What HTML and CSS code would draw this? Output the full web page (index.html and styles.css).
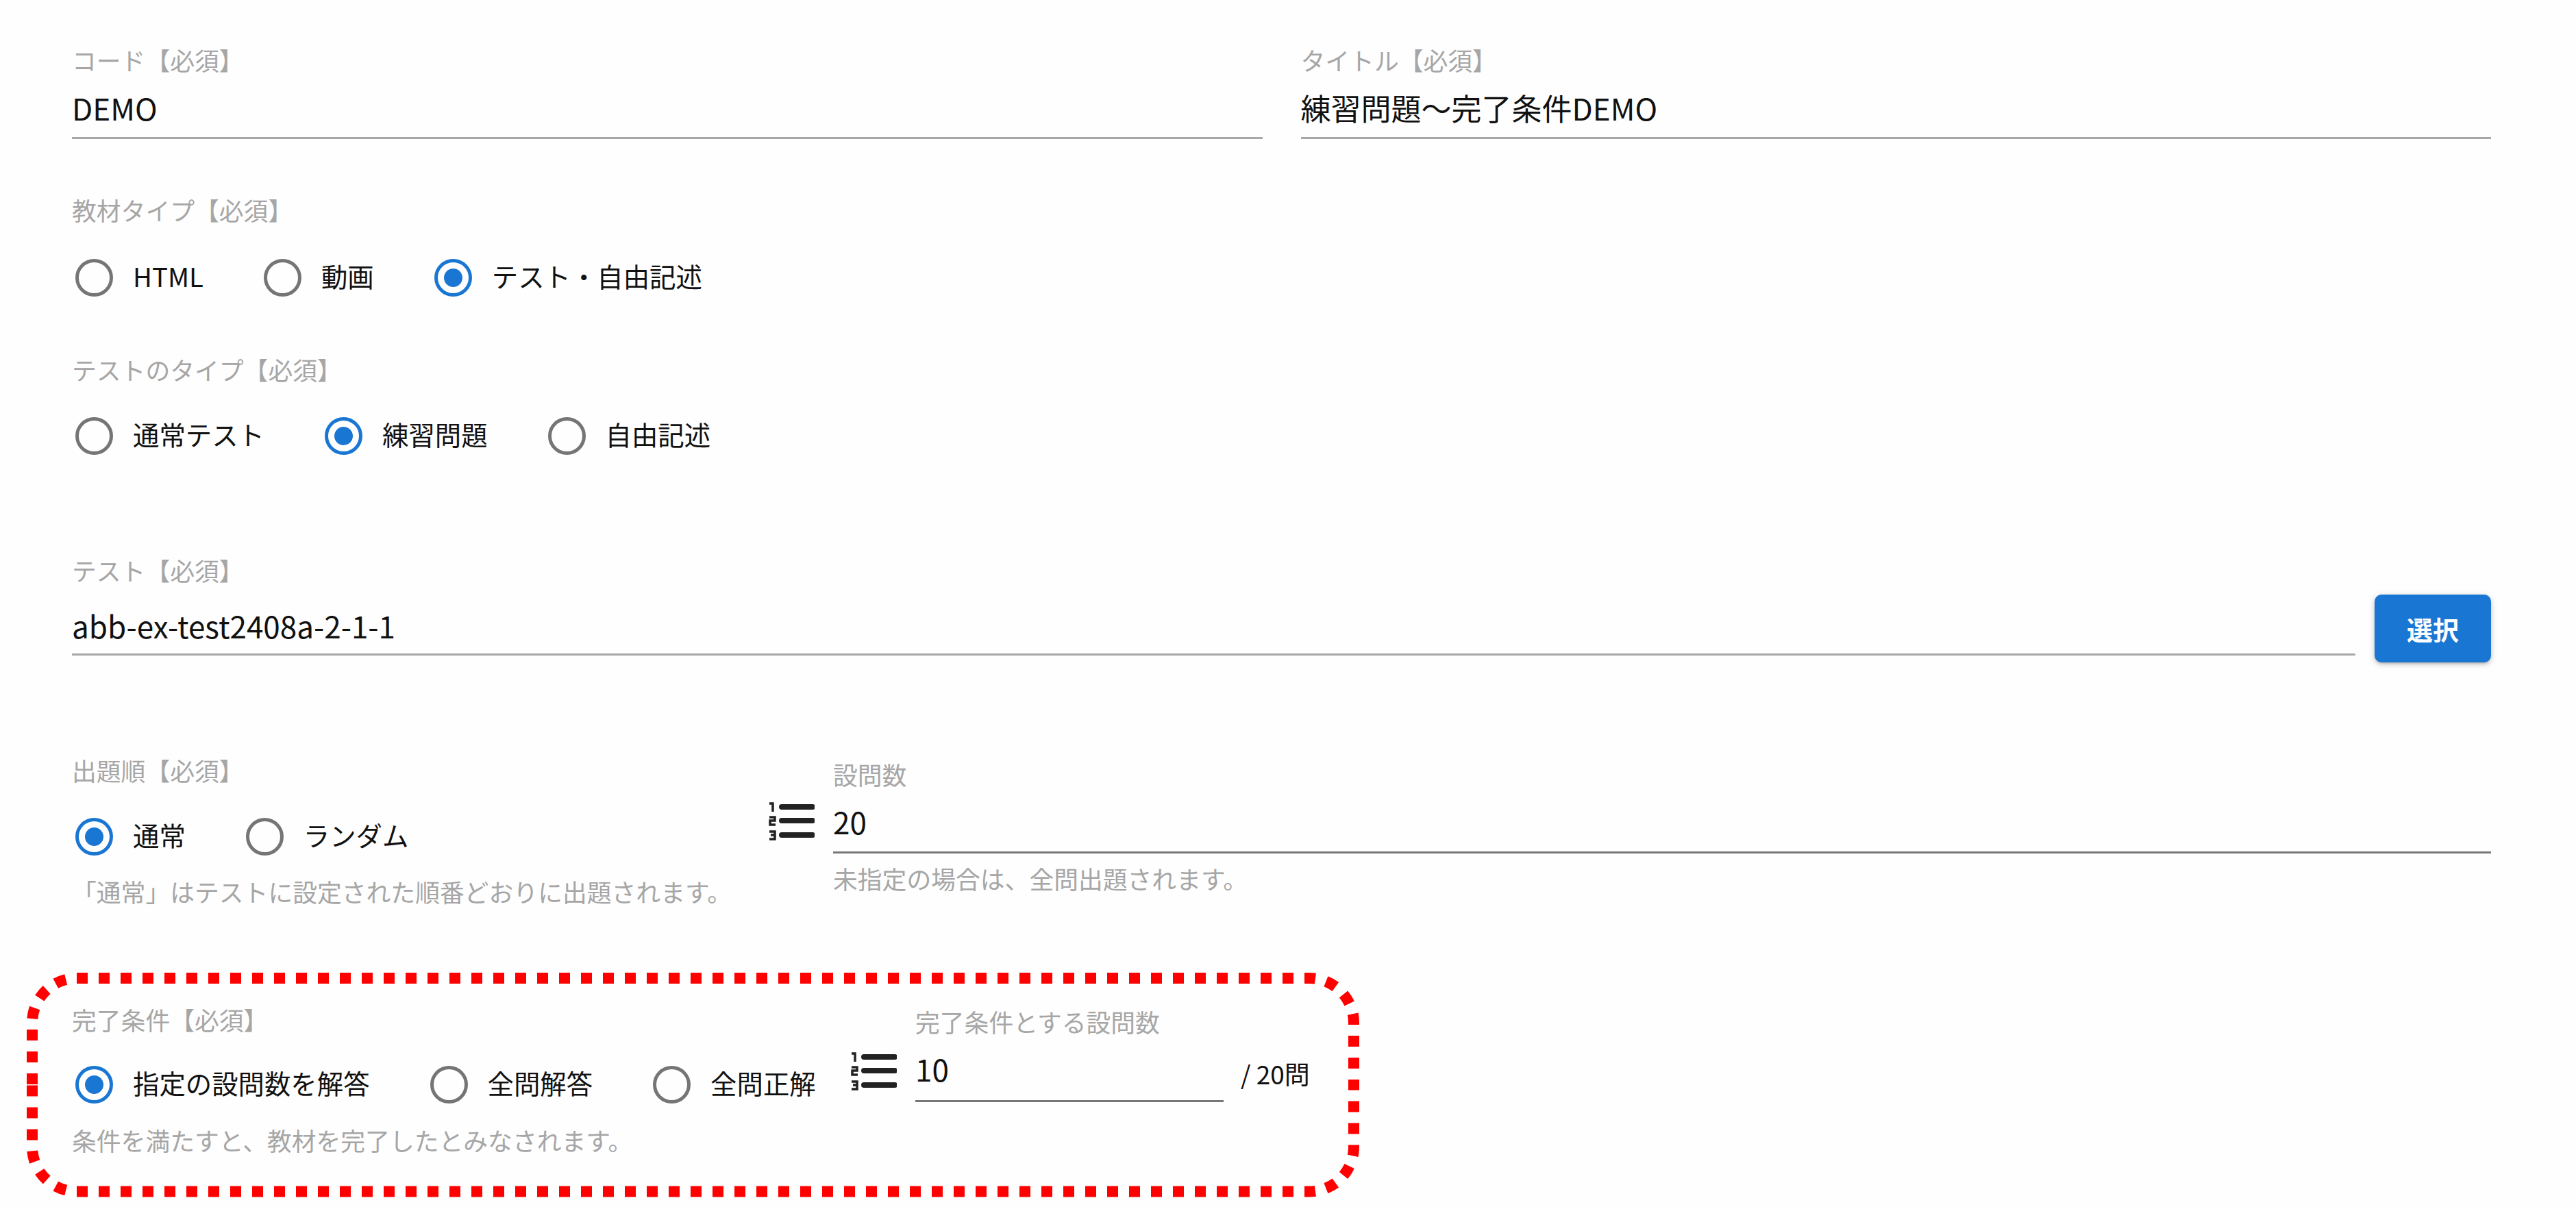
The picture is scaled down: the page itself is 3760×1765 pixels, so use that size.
FILE: index.html
```html
<!DOCTYPE html>
<html lang="ja">
<head>
    <meta charset="UTF-8">
    <title>教材編集</title>
    <link rel="stylesheet" href="styles.css">
</head>
<body>
    <form class="form">
        <div class="row-basic">
            <div class="field">
                <div class="field-label">コード【必須】</div>
                <div class="field-value">DEMO</div>
            </div>
            <div class="field">
                <div class="field-label">タイトル【必須】</div>
                <div class="field-value">練習問題～完了条件DEMO</div>
            </div>
        </div>

        <div class="group group-material">
            <div class="field-label">教材タイプ【必須】</div>
            <div class="radio-row">
                <label class="radio-option"><input type="radio" name="material"><span>HTML</span></label>
                <label class="radio-option"><input type="radio" name="material"><span>動画</span></label>
                <label class="radio-option"><input type="radio" name="material" checked><span>テスト・自由記述</span></label>
            </div>
        </div>

        <div class="group group-testtype">
            <div class="field-label">テストのタイプ【必須】</div>
            <div class="radio-row">
                <label class="radio-option"><input type="radio" name="testtype"><span>通常テスト</span></label>
                <label class="radio-option"><input type="radio" name="testtype" checked><span>練習問題</span></label>
                <label class="radio-option"><input type="radio" name="testtype"><span>自由記述</span></label>
            </div>
        </div>

        <div class="row-test">
            <div class="field field-test">
                <div class="field-label">テスト【必須】</div>
                <div class="field-value">abb-ex-test2408a-2-1-1</div>
            </div>
            <button type="button" class="select-button">選択</button>
        </div>

        <div class="row-order">
            <div class="order-left">
                <div class="field-label">出題順【必須】</div>
                <div class="radio-row">
                    <label class="radio-option"><input type="radio" name="order" checked><span>通常</span></label>
                    <label class="radio-option"><input type="radio" name="order"><span>ランダム</span></label>
                </div>
                <div class="hint hint-order">「通常」はテストに設定された順番どおりに出題されます。</div>
            </div>
            <div class="order-right">
                <svg class="list-icon" viewBox="0 0 67 56" fill="none" stroke="#222" stroke-width="3.5">
                    <path d="M1 2h5v12"/>
                    <path d="M1 22h8v5h-7v6h8"/>
                    <path d="M1 43h8v5h-6M9 48v6h-8"/>
                    <path d="M19 7h45M19 27h45M19 48h45" stroke-width="8" stroke-linecap="round"/>
                </svg>
                <div class="field field-count">
                    <div class="field-label">設問数</div>
                    <div class="field-value">20</div>
                    <div class="hint">未指定の場合は、全問出題されます。</div>
                </div>
            </div>
        </div>

        <div class="row-complete">
            <svg class="highlight" width="1960" height="345" viewBox="30 1411 1960 345" fill="none" stroke="#f00" stroke-width="16" stroke-dasharray="16 16">
                <path d="M112 1428H1911A65 65 0 0 1 1976 1493V1584"/>
                <path d="M112 1739.5H1911A65 65 0 0 0 1976 1674.5V1584"/>
                <path d="M112 1428A65 65 0 0 0 47 1493V1584" stroke-dashoffset="16"/>
                <path d="M112 1739.5A65 65 0 0 1 47 1674.5V1584" stroke-dashoffset="16"/>
            </svg>
            <div class="complete-left">
                <div class="field-label">完了条件【必須】</div>
                <div class="radio-row">
                    <label class="radio-option"><input type="radio" name="complete" checked><span>指定の設問数を解答</span></label>
                    <label class="radio-option"><input type="radio" name="complete"><span>全問解答</span></label>
                    <label class="radio-option"><input type="radio" name="complete"><span>全問正解</span></label>
                </div>
                <div class="hint hint-complete">条件を満たすと、教材を完了したとみなされます。</div>
            </div>
            <div class="complete-right">
                <svg class="list-icon list-icon-target" viewBox="0 0 67 56" fill="none" stroke="#222" stroke-width="3.5">
                    <path d="M1 2h5v12"/>
                    <path d="M1 22h8v5h-7v6h8"/>
                    <path d="M1 43h8v5h-6M9 48v6h-8"/>
                    <path d="M19 7h45M19 27h45M19 48h45" stroke-width="8" stroke-linecap="round"/>
                </svg>
                <div class="field field-target">
                    <div class="field-label">完了条件とする設問数</div>
                    <div class="field-value">10</div>
                </div>
                <div class="count-suffix">/ 20問</div>
            </div>
        </div>
    </form>
</body>
</html>
```

FILE: styles.css
```css
body {
    margin: 0;
    background-color: #fefefe;
    color: #111;
    font-family: "Noto Sans CJK JP", "Noto Sans", sans-serif;
}

.form {
    padding: 66px 124px 70px 105px;
}

.field-label {
    padding-bottom: 6px;
    font-size: 35.8px;
    line-height: 42px;
    color: #a6a6a6;
}

.field-value {
    margin-top: 16px;
    padding-bottom: 16px;
    border-bottom: 3px solid #a8a8a8;
    font-size: 44px;
    line-height: 54px;
}

.hint {
    padding-bottom: 6px;
    font-size: 35.8px;
    line-height: 42px;
    color: #a6a6a6;
}

.row-basic {
    display: flex;
    gap: 56px;
}

.field {
    flex: 1;
}

.group-material {
    margin-top: 82px;
}

.group-testtype {
    margin-top: 85px;
}

.radio-row {
    display: flex;
    gap: 88px;
    margin-top: 42px;
    padding-left: 5px;
}

.group-material .radio-row {
    margin-top: 44px;
}

.radio-option {
    display: flex;
    align-items: center;
    gap: 29px;
    font-size: 38.4px;
    line-height: 50px;
}

.radio-option span {
    padding-bottom: 6px;
}

.radio-option input {
    appearance: none;
    display: flex;
    align-items: center;
    justify-content: center;
    width: 55px;
    height: 55px;
    margin: 0;
    border: 5px solid #757575;
    border-radius: 50%;
    box-sizing: border-box;
}

.radio-option input:checked {
    border-color: #1976d2;
}

.radio-option input:checked::after {
    content: "";
    width: 27px;
    height: 27px;
    border-radius: 50%;
    background-color: #1976d2;
}

.row-test {
    display: flex;
    align-items: flex-end;
    gap: 28px;
    margin-top: 147px;
}

.field-test {
    margin-bottom: 10px;
}

.field-test .field-value {
    margin-top: 27px;
    padding-bottom: 14px;
}

.select-button {
    width: 170px;
    height: 99px;
    border: none;
    border-radius: 10px;
    background-color: #1976d2;
    color: white;
    font-family: inherit;
    font-size: 38px;
    font-weight: bold;
    box-shadow: 0 3px 3px -2px rgba(0, 0, 0, 0.2), 0 3px 6px 0 rgba(0, 0, 0, 0.14), 0 2px 12px 0 rgba(0, 0, 0, 0.12);
}

.row-order {
    display: flex;
    margin-top: 136px;
}

.order-left {
    width: 1017px;
    flex-shrink: 0;
}

.hint-order {
    margin-top: 31px;
}

.order-right {
    flex: 1;
    display: flex;
    gap: 27px;
    padding-top: 6px;
}

.list-icon {
    width: 67px;
    height: 56px;
    margin-top: 62px;
    flex-shrink: 0;
}

.list-icon-target {
    margin-top: 66px;
}

.field-count .field-value {
    margin-top: 15px;
    padding-bottom: 17px;
    border-bottom-color: #777;
}

.field-count .hint {
    margin-top: 15px;
}

.row-complete {
    position: relative;
    display: flex;
    margin-top: 139px;
}

.highlight {
    position: absolute;
    top: -56px;
    left: -75px;
}

.complete-left {
    width: 1137px;
    flex-shrink: 0;
}

.complete-left .radio-row {
    margin-top: 40px;
}

.hint-complete {
    margin-top: 32px;
}

.complete-right {
    display: flex;
    gap: 27px;
    padding-top: 3px;
}

.field-target {
    flex: none;
    width: 450px;
}

.field-target .field-value {
    margin-top: 15px;
    padding-bottom: 19px;
    border-bottom-color: #777;
}

.count-suffix {
    margin-top: 73px;
    margin-left: -2px;
    font-size: 37px;
    line-height: 48px;
}
```
